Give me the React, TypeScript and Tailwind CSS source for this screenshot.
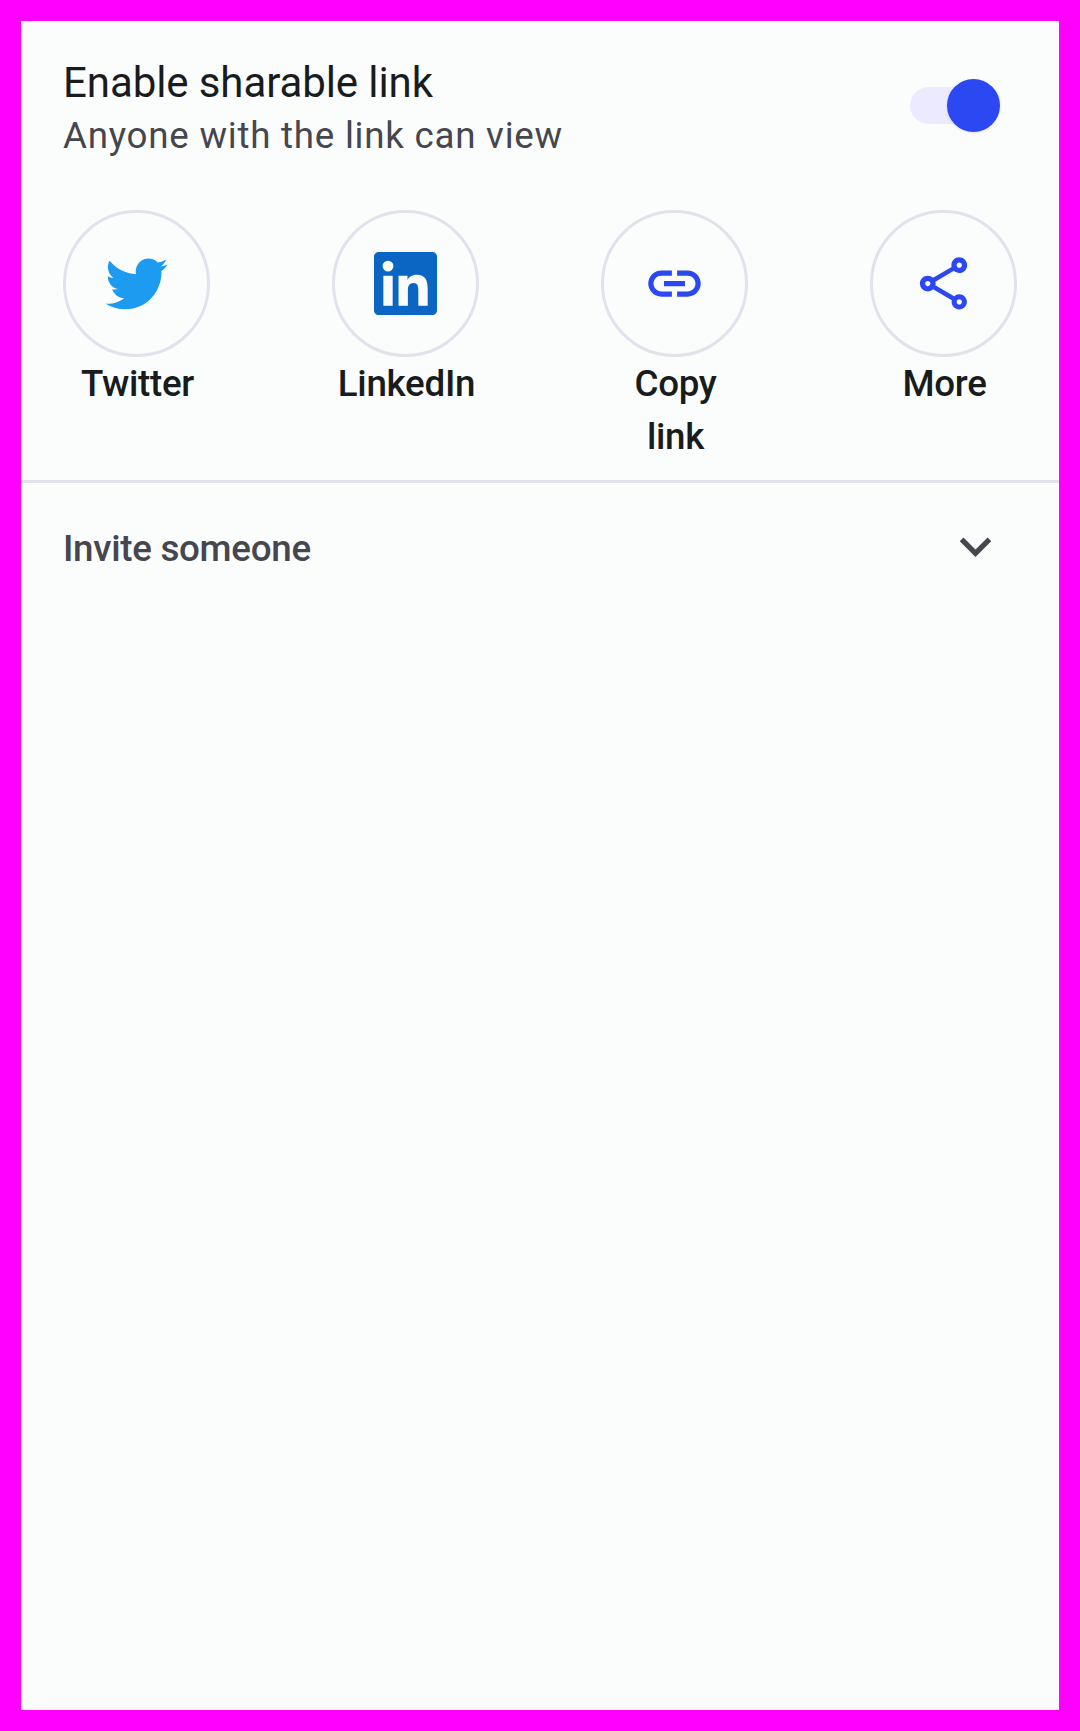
import type { ReactNode } from "react";
import { MdExpandMore, MdOutlineShare } from "react-icons/md";

function TwitterIcon() {
  return (
    <svg viewBox="0 0 248 204" className="h-[52px] w-[63px] fill-[#1d9bf0]">
      <path d="M221.95 51.29c.15 2.17.15 4.34.15 6.53 0 66.73-50.8 143.69-143.69 143.69v-.04c-27.44.04-54.31-7.82-77.41-22.64 3.99.48 8 .72 12.02.73 22.74.02 44.83-7.61 62.72-21.66-21.61-.41-40.56-14.5-47.18-35.07 7.57 1.46 15.37 1.16 22.8-.87-23.56-4.76-40.51-25.46-40.51-49.5v-.64c7.02 3.91 14.88 6.08 22.92 6.32C11.58 63.31 4.74 33.79 18.14 10.71c25.64 31.55 63.47 50.73 104.08 52.76-4.07-17.54 1.49-35.92 14.61-48.25 20.34-19.12 52.33-18.14 71.45 2.19 11.31-2.23 22.15-6.38 32.07-12.26-3.77 11.69-11.66 21.62-22.2 27.93 10.01-1.18 19.79-3.86 29-7.95-6.78 10.16-15.32 19.01-25.2 26.16z" />
    </svg>
  );
}

function LinkedInIcon() {
  return (
    <svg viewBox="0 0 24 24" className="size-[63px] fill-[#0a66c2]">
      <path d="M20.447 20.452h-3.554v-5.569c0-1.328-.027-3.037-1.852-3.037-1.853 0-2.136 1.445-2.136 2.939v5.667H9.351V9h3.414v1.561h.046c.477-.9 1.637-1.85 3.37-1.85 3.601 0 4.267 2.37 4.267 5.455v6.286zM5.337 7.433a2.062 2.062 0 0 1-2.063-2.065 2.064 2.064 0 1 1 2.063 2.065zm1.782 13.019H3.555V9h3.564v11.452zM22.225 0H1.771C.792 0 0 .774 0 1.729v20.542C0 23.227.792 24 1.771 24h20.451C23.2 24 24 23.227 24 22.271V1.729C24 .774 23.2 0 22.222 0h.003z" />
    </svg>
  );
}

function LinkIcon() {
  return (
    <svg viewBox="0 0 24 24" className="size-[63px] fill-[#2b48f2]">
      <path d="M17 7h-4v2h4c1.65 0 3 1.35 3 3s-1.35 3-3 3h-4v2h4c2.76 0 5-2.24 5-5s-2.24-5-5-5zm-6 8H7c-1.65 0-3-1.35-3-3s1.35-3 3-3h4V7H7c-2.76 0-5 2.24-5 5s2.24 5 5 5h4v-2zm-3-4h8v2H8z" />
    </svg>
  );
}

function ShareOption({ label, children }: { label: ReactNode; children: ReactNode }) {
  return (
    <button className="flex w-[147px] flex-col items-center">
      <span className="flex size-[147px] items-center justify-center rounded-full border-[3px] border-[#e3e1ec]">
        {children}
      </span>
      <span className="w-full pt-px pl-[2px] text-center text-[36.75px] leading-[52.5px] font-medium tracking-[-0.3px] text-[#191c1d]">
        {label}
      </span>
    </button>
  );
}

export default function App() {
  return (
    <main className="flex h-[1731px] w-[1080px] flex-col border-[21px] border-[#ff00ff] bg-[#fbfdfd] font-['Roboto',sans-serif]">
      <section className="flex h-[189px] items-start justify-between pt-[36px] pr-[59px] pl-[42px]">
        <div>
          <h1 className="text-[42px] leading-[52px] tracking-[-0.09px] text-[#191c1d]">
            Enable sharable link
          </h1>
          <p className="text-[36.75px] leading-[53px] tracking-[0.74px] text-[#46464f]">
            Anyone with the link can view
          </p>
        </div>
        <button
          role="switch"
          aria-checked="true"
          aria-label="Enable sharable link"
          className="mt-[30px] flex h-[37px] w-[90px] items-center justify-end rounded-full bg-[#ebeafe]"
        >
          <span className="size-[53px] shrink-0 rounded-full bg-[#2b48f2] shadow-[0_1px_3px_rgba(0,0,0,0.1)]" />
        </button>
      </section>
      <section className="flex h-[270px] items-start justify-between px-[42px]">
        <ShareOption label="Twitter">
          <TwitterIcon />
        </ShareOption>
        <ShareOption label="LinkedIn">
          <LinkedInIcon />
        </ShareOption>
        <ShareOption
          label={
            <>
              Copy
              <br />
              link
            </>
          }
        >
          <LinkIcon />
        </ShareOption>
        <ShareOption label="More">
          <MdOutlineShare className="size-[63px] text-[#2b48f2]" />
        </ShareOption>
      </section>
      <hr className="h-[3px] border-0 bg-[#e3e1ec]" />
      <button className="flex h-[127px] items-center justify-between pr-[52px] pl-[42px]">
        <span className="pt-1 text-[36.75px] leading-[52px] font-medium tracking-[-0.3px] text-[#46464f]">
          Invite someone
        </span>
        <MdExpandMore className="size-[63px] text-[#46464f]" />
      </button>
    </main>
  );
}
